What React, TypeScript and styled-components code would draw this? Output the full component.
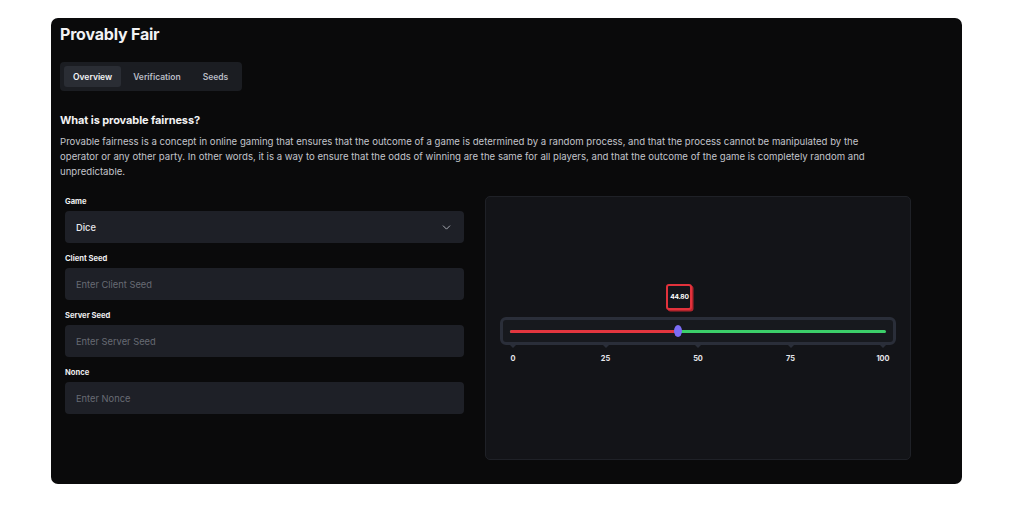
import React, { useState } from 'react';
import styled, { createGlobalStyle } from 'styled-components';
import { ChevronDown } from 'lucide-react';

const GlobalStyle = createGlobalStyle`
  body {
    margin: 0;
    background: #ffffff;
    font-family: Inter, "Liberation Sans", Arial, sans-serif;
  }
`;

const Page = styled.div`
  width: 1024px;
  height: 512px;
  padding: 18px 0 0 51px;
  box-sizing: border-box;
`;

const Card = styled.section`
  width: 911px;
  height: 466px;
  box-sizing: border-box;
  background: #0a0a0b;
  border-radius: 7px;
  padding: 6px 9px 0 9px;
  color: #f2f2f4;
`;

const Title = styled.h1`
  margin: 0;
  font-size: 16px;
  line-height: 20px;
  font-weight: 700;
  letter-spacing: -0.2px;
`;

const TabList = styled.div`
  display: inline-flex;
  margin-top: 18px;
  padding: 4px;
  gap: 2px;
  background: #1b1d22;
  border-radius: 4px;
`;

const Tab = styled.button<{ $active?: boolean }>`
  border: none;
  height: 21px;
  padding: 0 ${(p) => (p.$active ? 9 : 10)}px;
  border-radius: 3px;
  font-family: inherit;
  font-size: 8.5px;
  font-weight: 600;
  color: ${(p) => (p.$active ? '#f4f4f6' : '#b9bcc4')};
  background: ${(p) => (p.$active ? '#2a2d34' : 'transparent')};
  cursor: pointer;
`;

const Heading = styled.h2`
  margin: 21px 0 0;
  font-size: 11px;
  line-height: 16px;
  font-weight: 700;
  letter-spacing: -0.1px;
`;

const Intro = styled.p`
  margin: 6px 0 0;
  max-width: 815px;
  font-size: 9.6px;
  line-height: 15px;
  color: #c3c5cc;
`;

const Columns = styled.div`
  display: grid;
  grid-template-columns: 399px 426px;
  column-gap: 21px;
  margin-top: 17px;
  padding-left: 5px;
`;

const Form = styled.div`
  display: flex;
  flex-direction: column;
  gap: 11px;
  padding-top: 1px;
`;

const Field = styled.label`
  display: flex;
  flex-direction: column;
  gap: 4px;
`;

const FieldLabel = styled.span`
  font-size: 7.6px;
  line-height: 10px;
  font-weight: 700;
  color: #eeeef0;
`;

const Box = styled.div`
  height: 32px;
  box-sizing: border-box;
  display: flex;
  align-items: center;
  justify-content: space-between;
  padding: 0 11px;
  background: #1e2027;
  border-radius: 4px;
  color: #e9e9ec;
  font-size: 9.3px;
  font-weight: 500;
`;

const Input = styled.input`
  height: 32px;
  box-sizing: border-box;
  padding: 0 11px;
  border: none;
  outline: none;
  background: #1e2027;
  border-radius: 4px;
  color: #e9e9ec;
  font-family: inherit;
  font-size: 9.3px;

  &::placeholder {
    color: #686b74;
  }
`;

const Panel = styled.div`
  height: 264px;
  box-sizing: border-box;
  background: #131418;
  border: 1px solid #1f2127;
  border-radius: 5px;
  padding: 87px 14px 0;
`;

const SliderBlock = styled.div`
  position: relative;
  padding-top: 33px;
`;

const Bubble = styled.div`
  position: absolute;
  top: 0;
  width: 26px;
  height: 26px;
  box-sizing: border-box;
  border: 2px solid #e2323c;
  border-radius: 3px;
  background: #14151a;
  box-shadow: 1.5px 1.5px 0 #b4242c;
  display: flex;
  align-items: center;
  justify-content: center;
  font-size: 6.6px;
  font-weight: 700;
  color: #ffffff;
  letter-spacing: -0.2px;
`;

const Track = styled.div`
  height: 28px;
  box-sizing: border-box;
  border: 3px solid #2a2e39;
  border-radius: 6px;
  background: #17191e;
  padding: 0 7px;
  display: flex;
  align-items: center;
`;

const Rail = styled.div`
  position: relative;
  flex: 1;
  height: 3px;
  border-radius: 2px;
  background: #3ccf6a;
`;

const Filled = styled.div`
  height: 100%;
  border-radius: 2px 0 0 2px;
  background: #e3363f;
`;

const Thumb = styled.div`
  position: absolute;
  top: 50%;
  width: 8px;
  height: 12px;
  margin: -6px 0 0 -4px;
  border-radius: 50%;
  background: #7b6cf5;
`;

const Scale = styled.div`
  display: flex;
  justify-content: space-between;
  padding: 0 13px 0 13px;
`;

const Mark = styled.div`
  width: 0;
  display: flex;
  flex-direction: column;
  align-items: center;
`;

const Notch = styled.span`
  width: 0;
  height: 0;
  border-left: 3px solid transparent;
  border-right: 3px solid transparent;
  border-top: 3px solid #2a2e39;
`;

const MarkText = styled.span`
  margin-top: 6px;
  font-size: 7.4px;
  line-height: 10px;
  font-weight: 700;
  color: #e6e6ea;
  white-space: nowrap;
`;

const fields = [
  { label: 'Client Seed', placeholder: 'Enter Client Seed' },
  { label: 'Server Seed', placeholder: 'Enter Server Seed' },
  { label: 'Nonce', placeholder: 'Enter Nonce' },
];

const DiceSlider = ({ value }: { value: number }) => {
  // rail runs from x=10 to x=386 inside the 396px track
  const railX = 10 + (376 * value) / 100;
  return (
    <SliderBlock>
      <Bubble style={{ left: railX - 12 }}>{value.toFixed(2)}</Bubble>
      <Track>
        <Rail>
          <Filled style={{ width: `${value}%` }} />
          <Thumb style={{ left: `${value}%` }} />
        </Rail>
      </Track>
      <Scale>
        {[0, 25, 50, 75, 100].map((n) => (
          <Mark key={n}>
            <Notch />
            <MarkText>{n}</MarkText>
          </Mark>
        ))}
      </Scale>
    </SliderBlock>
  );
};

const App = () => {
  const [tab, setTab] = useState('Overview');

  return (
    <Page>
      <GlobalStyle />
      <Card>
        <Title>Provably Fair</Title>
        <TabList>
          {['Overview', 'Verification', 'Seeds'].map((t) => (
            <Tab key={t} $active={tab === t} onClick={() => setTab(t)}>
              {t}
            </Tab>
          ))}
        </TabList>
        <Heading>What is provable fairness?</Heading>
        <Intro>
          Provable fairness is a concept in online gaming that ensures that the outcome of a game is determined by a
          random process, and that the process cannot be manipulated by the operator or any other party. In other
          words, it is a way to ensure that the odds of winning are the same for all players, and that the outcome of
          the game is completely random and unpredictable.
        </Intro>
        <Columns>
          <Form>
            <Field>
              <FieldLabel>Game</FieldLabel>
              <Box>
                Dice
                <ChevronDown size={13} color="#a9acb4" strokeWidth={1.8} />
              </Box>
            </Field>
            {fields.map((f) => (
              <Field key={f.label}>
                <FieldLabel>{f.label}</FieldLabel>
                <Input placeholder={f.placeholder} />
              </Field>
            ))}
          </Form>
          <Panel>
            <DiceSlider value={44.8} />
          </Panel>
        </Columns>
      </Card>
    </Page>
  );
};

export default App;
